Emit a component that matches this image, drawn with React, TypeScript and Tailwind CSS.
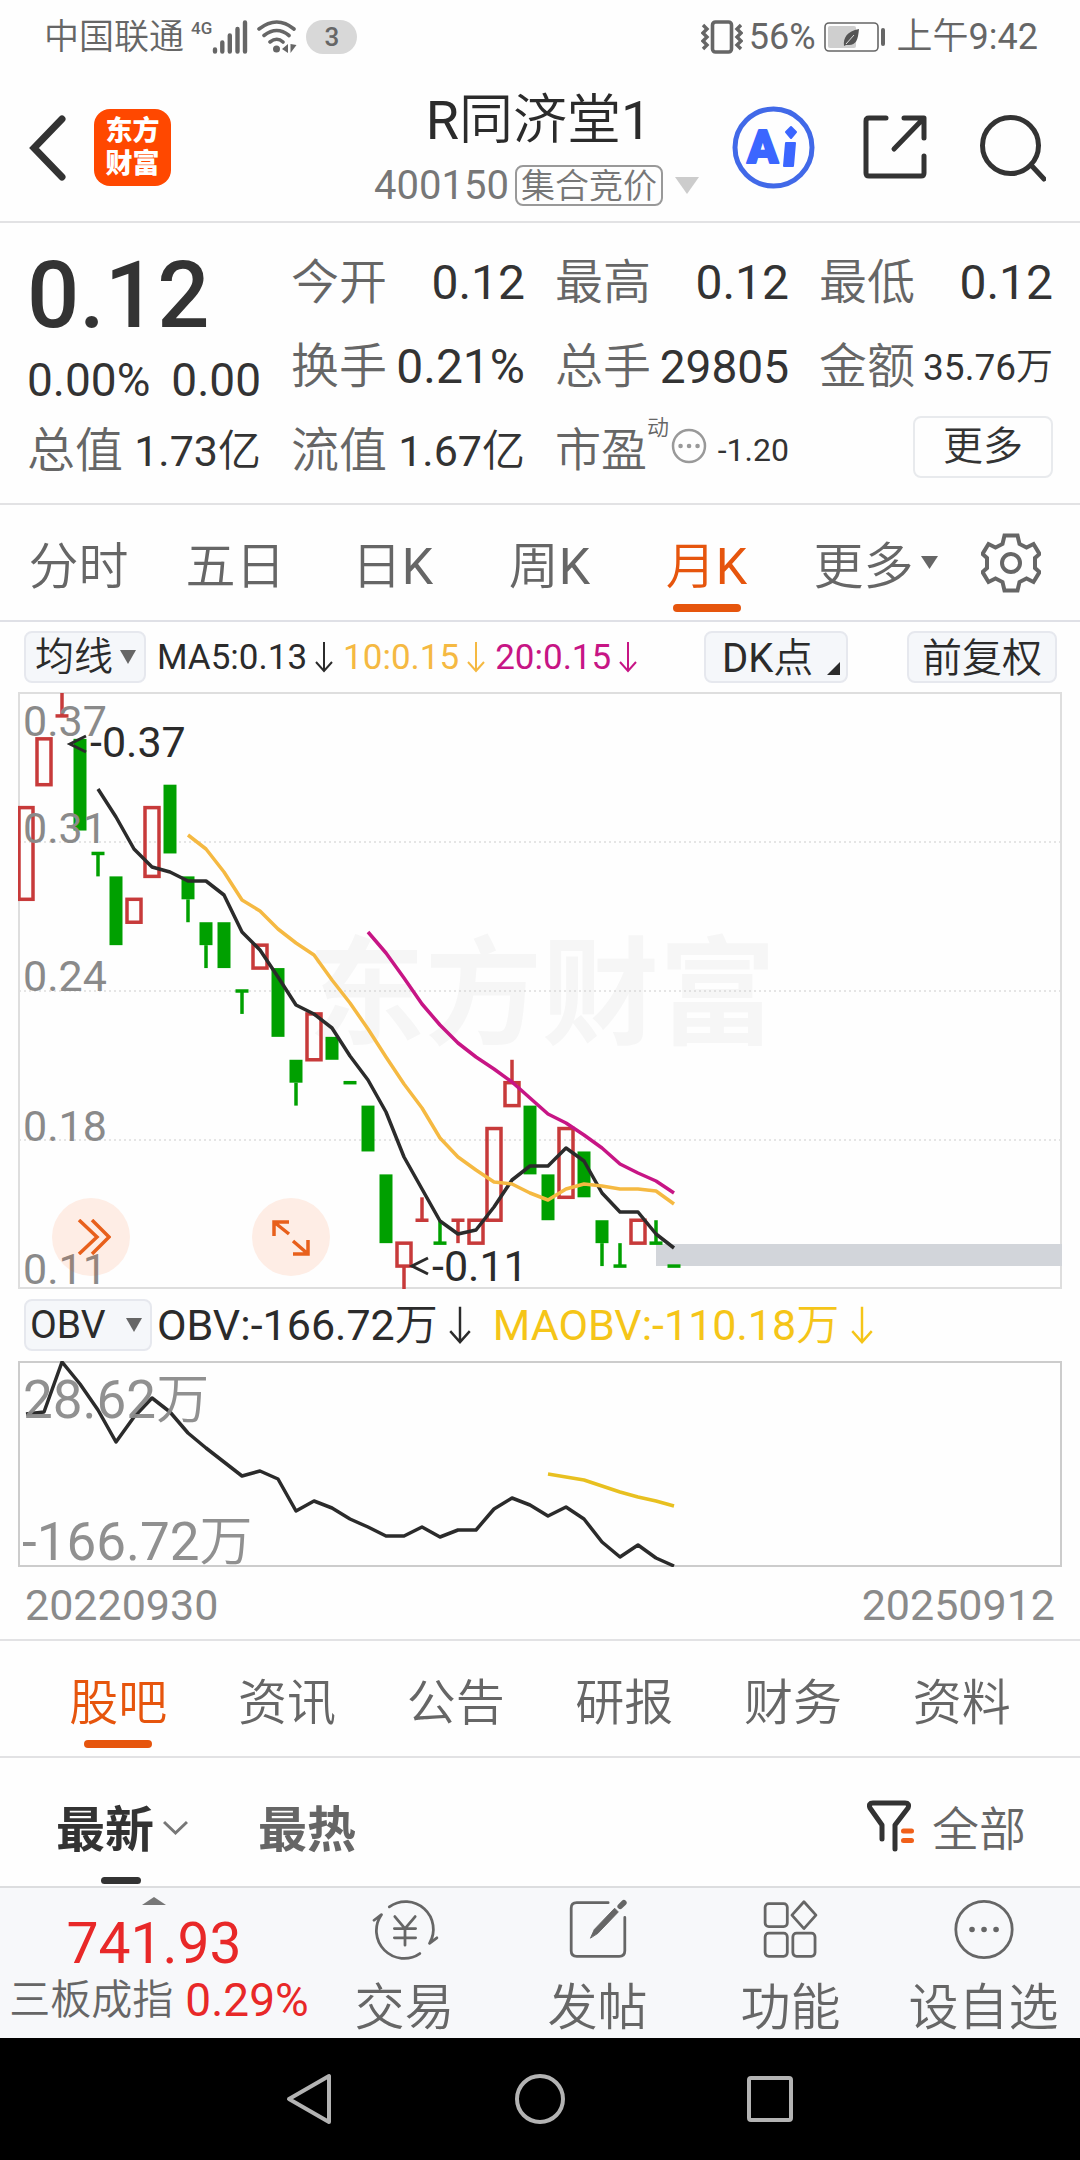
import React from "react";

type Candle = {
  up?: boolean;
  open: number;
  close: number;
  high?: number;
  low?: number;
};

// levels are counted downwards, one level is one cent
const candles: Candle[] = [
  { up: true, open: 5, close: 9 },
  { up: true, open: 2, close: 4 },
  { up: true, open: 1, close: 1, high: 0 },
  { open: 2, close: 6 },
  { open: 7, close: 7, low: 8 },
  { open: 8, close: 11 },
  { up: true, open: 9, close: 10 },
  { up: true, open: 5, close: 8 },
  { open: 4, close: 7 },
  { open: 8, close: 9, low: 10 },
  { open: 10, close: 11, low: 12 },
  { open: 10, close: 12 },
  { open: 13, close: 13, low: 14 },
  { up: true, open: 11, close: 12 },
  { open: 12, close: 15 },
  { open: 16, close: 17, low: 18 },
  { up: true, open: 14, close: 16 },
  { open: 15, close: 16 },
  { open: 17, close: 17 },
  { open: 18, close: 20 },
  { open: 21, close: 24 },
  { up: true, open: 24, close: 25, low: 26 },
  { up: true, open: 23, close: 23, high: 22 },
  { open: 24, close: 24, high: 23 },
  { up: true, open: 23, close: 23, low: 24 },
  { up: true, open: 23, close: 24 },
  { up: true, open: 19, close: 23 },
  { up: true, open: 17, close: 18, high: 16 },
  { open: 18, close: 21 },
  { open: 21, close: 23 },
  { up: true, open: 19, close: 22 },
  { open: 20, close: 22 },
  { open: 23, close: 24, low: 25 },
  { open: 25, close: 25, high: 24 },
  { up: true, open: 23, close: 24 },
  { open: 24, close: 24, high: 23 },
  { open: 25, close: 25 },
];

const ma5 = [
  97, 125, 157, 175, 180, 189, 189, 203, 240, 258, 285, 313, 322, 336, 364, 388,
  420, 465, 497, 529, 542, 538, 515, 488, 474, 474, 456, 469, 501, 520, 520, 542,
  556,
];
const ma10 = [
  143, 157, 180, 208, 219, 237, 251, 263, 288, 311, 337, 365, 392, 416, 446, 465,
  478, 490, 492, 501, 508, 497, 492, 494, 497, 497, 499, 512,
];
const ma20 = [
  240, 261, 286, 312, 333, 351, 365, 377, 390, 406, 422, 431, 443, 456, 472, 481,
  489, 501,
];
const obv = [
  53, 51, 1, 23, 49, 81, 56, 37, 51, 72, 87, 101, 115, 110, 118, 150, 140, 147,
  158, 166, 175, 175, 166, 176, 169, 169, 148, 137, 144, 155, 146, 158, 181, 196,
  184, 197, 205,
];
const maObv = [113, 116, 119, 125, 131, 136, 140, 145];

const xOf = (i: number) => 8 + i * 18;
const yOf = (level: number) => 1 + (level * 596) / 26;
const toPoints = (ys: number[], start: number) =>
  ys.map((y, i) => `${xOf(i + start)},${y}`).join(" ");

const StatusBar = () => (
  <div className="flex h-[74px] items-center justify-between pl-[44px] pr-[42px] text-[#666]">
    <div className="flex items-center">
      <span className="text-[35px] leading-none font-[350]">中国联通</span>
      <span className="ml-[7px] mb-[18px] text-[17px] leading-none font-medium">4G</span>
      <svg className="h-[34px] w-[36px]" viewBox="0 0 36 34" stroke="#666" strokeWidth="4.4" strokeLinecap="round">
        <path d="M3 29.500v2M10.300 22.500v9M17.800 15.500v16M25.500 9v22.500M33 2.500v29" />
      </svg>
      <svg className="ml-[9px] h-[34px] w-[40px]" viewBox="0 0 40 34" fill="none" stroke="#666" strokeWidth="3.600" strokeLinecap="round">
        <path d="M2 9Q20-5 37 9M7 15.500Q20 5.500 32 15.500M13 22Q20 16.500 26 22" />
        <circle cx="19.500" cy="29" r="3.500" fill="#666" stroke="none" />
        <path d="M31 24v9l-6-4zM33.500 24v9l6-8z" fill="#666" stroke="none" />
      </svg>
      <span className="ml-[9px] flex h-[34px] w-[51px] items-center justify-center rounded-full bg-[#d8d8d8] text-[26px] leading-none font-medium">
        3
      </span>
    </div>
    <div className="flex items-center text-[36px] leading-none">
      <svg className="h-[34px] w-[42px]" viewBox="0 0 42 34" fill="none" stroke="#666">
        <rect x="11.500" y="2" width="19" height="30" rx="3" strokeWidth="3.600" />
        <path d="M2 5l4 4-4 4 4 4-4 4 4 4-4 4M40 5l-4 4 4 4-4 4 4 4-4 4 4 4" strokeWidth="3.400" />
      </svg>
      <span className="ml-[6px]">56%</span>
      <svg className="ml-[8px] h-[30px] w-[62px]" viewBox="0 0 62 30" fill="none">
        <rect x="1" y="1" width="53" height="28" rx="4" stroke="#666" strokeWidth="1.600" />
        <rect x="4" y="4" width="28" height="22" rx="2" fill="#cfcfcf" />
        <path d="M35 7c-1 11-3 16-10 16l-3 0-2 1c-1-8 3-15 15-17z" fill="#555" />
        <path d="M22 22l8-9" stroke="#ddd" strokeWidth="1" />
        <rect x="57" y="6" width="4" height="18" rx="2" fill="#666" />
      </svg>
      <span className="ml-[11px] font-[350]">上午</span>
      <span>9:42</span>
    </div>
  </div>
);

const Header = () => (
  <header className="flex h-[149px] items-center border-b-2 border-[#e2e2e4] pl-[28px] pr-[34px] text-[#333]">
    <button aria-label="返回">
      <svg className="h-[66px] w-[38px]" viewBox="0 0 38 66" fill="none" stroke="#333" strokeWidth="7" strokeLinecap="round">
        <path d="M34 4L6 33l28 29" />
      </svg>
    </button>
    <div className="ml-[28px] grid h-[77px] w-[77px] place-content-center rounded-[16px] bg-[#ff4800] text-[27px] leading-[33px] font-black text-white">
      <span>东方</span>
      <span>财富</span>
    </div>
    <button className="ml-auto flex flex-col items-center gap-[14px] pt-[2px]">
      <span className="pl-[4px] text-[54px] leading-[60px] text-[#2b2b2b]">
        R<span className="font-[350]">同济堂</span>1
      </span>
      <span className="flex items-center text-[#777]">
        <span className="text-[40px] leading-none">400150</span>
        <span className="ml-[6px] flex h-[41px] items-center rounded-[8px] border-2 border-[#999] px-[4px] text-[34px] leading-none font-[350]">
          集合竞价
        </span>
        <svg className="ml-[12px] h-[17px] w-[24px]" viewBox="0 0 24 17">
          <path d="M0 0h24L12 17z" fill="#ccc" />
        </svg>
      </span>
    </button>
    <button aria-label="AI" className="ml-[33px]">
      <svg className="h-[83px] w-[83px]" viewBox="0 0 83 83">
        <circle cx="41.500" cy="41.500" r="38.500" fill="none" stroke="#4169e8" strokeWidth="5" />
        <g fill="#3b66ff" stroke="#3b66ff" strokeWidth="2" strokeLinejoin="round">
          <text x="15" y="57" className="text-[46px] font-black">A</text>
          <path d="M54 37h9l-2 23h-9z" />
          <path d="M59 21l5 5-5 6-5-6z" />
        </g>
      </svg>
    </button>
    <button aria-label="分享" className="ml-[48px]">
      <svg className="h-[65px] w-[65px]" viewBox="0 0 65 65" fill="none" stroke="#333" strokeWidth="5" strokeLinecap="round" strokeLinejoin="round">
        <path d="M23 3H6q-3 0-3 3v52q0 3 3 3h52q3 0 3-3V41M41 3h20v20M60 4L31 34" />
      </svg>
    </button>
    <button aria-label="搜索" className="ml-[52px]">
      <svg className="h-[68px] w-[66px]" viewBox="0 0 66 68" fill="none" stroke="#333" strokeWidth="5" strokeLinecap="round">
        <circle cx="30.500" cy="31.500" r="28" />
        <path d="M51 51l13 14" />
      </svg>
    </button>
  </header>
);

type StatProps = { label: string; value: string; unit?: string; size?: string };

const Stat = ({ label, value, unit, size = "text-[48px]" }: StatProps) => (
  <div className="flex items-center justify-between pt-[4px]">
    <span className="text-[48px] leading-none font-[350] text-[#666]">{label}</span>
    <span className={`${size} leading-none text-[#333]`}>
      {value}
      {unit && <span className="font-[350]">{unit}</span>}
    </span>
  </div>
);

const Quote = () => (
  <section className="grid auto-rows-[84px] grid-cols-4 gap-x-[30px] border-b-2 border-[#e2e2e4] px-[27px] pt-[16px] pb-[12px] whitespace-nowrap">
    <div className="row-span-2 text-[#333]">
      <div className="text-[92px] leading-[114px] font-medium">0.12</div>
      <div className="flex justify-between text-[46px] leading-[54px]">
        <span>0.00%</span>
        <span>0.00</span>
      </div>
    </div>
    <Stat label="今开" value="0.12" />
    <Stat label="最高" value="0.12" />
    <Stat label="最低" value="0.12" />
    <Stat label="换手" value="0.21%" />
    <Stat label="总手" value="29805" size="text-[46px]" />
    <Stat label="金额" value="35.76" unit="万" size="text-[37px]" />
    <Stat label="总值" value="1.73" unit="亿" size="text-[43px]" />
    <Stat label="流值" value="1.67" unit="亿" size="text-[43px]" />
    <div className="flex items-center pt-[2px]">
      <span className="text-[46px] leading-none font-[350] text-[#666]">市盈</span>
      <span className="mb-[44px] text-[22px] leading-none font-[350] text-[#666]">动</span>
      <svg className="mb-[9px] ml-[2px] h-[36px] w-[36px]" viewBox="0 0 36 36">
        <circle cx="18" cy="18" r="16" fill="none" stroke="#999" strokeWidth="2.500" />
        <path d="M9.500 18h.1M18 18h.1M26.500 18h.1" stroke="#999" strokeWidth="4.500" strokeLinecap="round" />
      </svg>
      <span className="ml-auto text-[32px] leading-none text-[#333]">-1.20</span>
    </div>
    <button className="mt-[9px] ml-auto h-[62px] w-[140px] rounded-[8px] border-2 border-[#e8eaed] text-[40px] leading-none font-[350] text-[#333]">
      更多
    </button>
  </section>
);

const periods = [
  { name: "分时" },
  { name: "五日" },
  { name: "日", suffix: "K" },
  { name: "周", suffix: "K" },
  { name: "月", suffix: "K", active: true },
];

const PeriodTabs = () => (
  <nav className="flex h-[117px] border-b-2 border-[#dfe0e6] text-[50px] leading-none text-[#666]">
    <div className="grid flex-1 grid-cols-6">
      {periods.map((p) => (
        <button
          key={p.name}
          className={`relative flex items-center justify-center pt-[8px] ${p.active ? "text-[#e6550d]" : ""}`}
        >
          <span className="font-[350]">{p.name}</span>
          {p.suffix}
          {p.active && <span className="absolute bottom-[8px] h-[8px] w-[68px] rounded-full bg-[#e6550d]" />}
        </button>
      ))}
      <button className="flex items-center justify-center gap-[7px] pt-[8px] pl-[24px] font-[350]">
        更多
        <svg className="mb-[8px] h-[13px] w-[17px]" viewBox="0 0 17 13">
          <path d="M0 0h17L8.500 13z" fill="#666" />
        </svg>
      </button>
    </div>
    <button aria-label="设置" className="flex w-[138px] items-center justify-center">
      <svg className="h-[60px] w-[60px]" viewBox="-30 -30 60 60" fill="none" stroke="#666" strokeWidth="4">
        <path d="M-6.500-27.500h13l2 8.500 7 3.500 7-3.500 6 10-4.500 4v10l4.500 4-6 10-7-3.500-7 3.500-2 8.500h-13l-2-8.500-7-3.500-7 3.500-6-10 4.500-4v-10l-4.500-4 6-10 7 3.500 7-3.500z" />
        <circle r="9" />
      </svg>
    </button>
  </nav>
);

const Down = ({ className }: { className: string }) => (
  <svg className={className} viewBox="0 0 18 32" fill="none" stroke="currentColor" strokeWidth="2">
    <path d="M9 1v29M1 21l8 9 8-9" />
  </svg>
);

const Picker = ({ label, value, className }: { label: string; value: string; className: string }) => (
  <div className="relative">
    <select
      aria-label={label}
      className={`block h-[52px] appearance-none rounded-[8px] border-2 border-[#e6e8ee] bg-[#f5f7fa] text-[39px] leading-[48px] text-[#2b2b2b] ${className}`}
    >
      <option>{value}</option>
    </select>
    <svg className="pointer-events-none absolute top-[19px] right-[10px] h-[14px] w-[16px]" viewBox="0 0 16 14">
      <path d="M0 0h16L8 14z" fill="#666" />
    </svg>
  </div>
);

const chip =
  "relative flex h-[52px] items-center rounded-[8px] border-2 border-[#e6e8ee] bg-[#f5f7fa] pt-[3px] text-[40px] leading-none text-[#2b2b2b]";

const AverageBar = () => (
  <div className="flex h-[70px] items-center pl-[24px] pr-[23px] text-[35px] leading-none whitespace-nowrap">
    <Picker label="主图指标" value="均线" className="w-[122px] pl-[9px] font-[350]" />
    <span className="ml-[11px] text-[#2b2b2b]">MA5:0.13</span>
    <Down className="ml-[8px] h-[32px] w-[18px] text-[#2b2b2b]" />
    <span className="ml-[10px] text-[#f5b942]">10:0.15</span>
    <Down className="ml-[8px] h-[32px] w-[18px] text-[#f5b942]" />
    <span className="ml-[10px] text-[#c71585]">20:0.15</span>
    <Down className="ml-[8px] h-[32px] w-[18px] text-[#c71585]" />
    <button className={`${chip} ml-auto w-[144px] pl-[16px]`}>
      DK<span className="font-[350]">点</span>
      <svg className="absolute right-[6px] bottom-[6px] h-[13px] w-[13px]" viewBox="0 0 13 13">
        <path d="M13 0v13H0z" fill="#2b2b2b" />
      </svg>
    </button>
    <button className={`${chip} ml-[59px] w-[150px] justify-center font-[350]`}>前复权</button>
  </div>
);

const Bar = ({ c, x }: { c: Candle; x: number }) => {
  const color = c.up ? "#c73a3a" : "#00a000";
  const top = yOf(c.open);
  const bottom = yOf(c.close);
  return (
    <g stroke={color} strokeWidth="3.500">
      {c.high !== undefined && <path d={`M${x} ${yOf(c.high)}V${top}`} />}
      {c.low !== undefined && <path d={`M${x} ${bottom}V${yOf(c.low)}`} />}
      {c.open === c.close ? (
        <path d={`M${x - 6.5} ${top}h13`} />
      ) : c.up ? (
        <rect x={x - 7} y={top} width="14" height={bottom - top} fill="none" />
      ) : (
        <rect x={x - 6.5} y={top} width="13" height={bottom - top} fill={color} stroke="none" />
      )}
    </g>
  );
};

const PriceChart = () => (
  <div className="relative px-[18px]">
    <svg className="block w-full" viewBox="0 0 1044 597">
      <text x="290" y="343" className="text-[117px] font-bold" fill="#f6f6f6">
        东方财富
      </text>
      <path d="M1 150h1042M1 299h1042M1 448h1042" stroke="#ccc" strokeDasharray="2 3" />
      <rect x="1" y="1" width="1042" height="595" fill="none" stroke="#dedede" strokeWidth="2" />
      <rect x="638" y="552" width="406" height="22" fill="#d2d5da" />
      {candles.map((c, i) => (
        <Bar key={i} c={c} x={xOf(i)} />
      ))}
      <g fill="none" strokeWidth="3.500" strokeLinejoin="round">
        <polyline points={toPoints(ma5, 4)} stroke="#2b2b2b" />
        <polyline points={toPoints(ma10, 9)} stroke="#f5b942" />
        <polyline points={toPoints(ma20, 19)} stroke="#c71585" />
      </g>
      <g fill="#8a8a8a" className="text-[43px]">
        <text x="5" y="44">0.37</text>
        <text x="5" y="151">0.31</text>
        <text x="5" y="299">0.24</text>
        <text x="5" y="449">0.18</text>
        <text x="5" y="592">0.11</text>
      </g>
      <g fill="#2b2b2b" className="text-[43px]">
        <text x="72" y="65">-0.37</text>
        <text x="414" y="589">-0.11</text>
      </g>
      <path d="M68 44l-16 8 16 8M410 566l-16 8 16 8" fill="none" stroke="#2b2b2b" strokeWidth="3" />
    </svg>
    <button
      aria-label="展开"
      className="absolute bottom-[13px] left-[52px] flex h-[78px] w-[78px] items-center justify-center rounded-full bg-[#ff5a0a]/10 pl-[6px]"
    >
      <svg className="h-[36px] w-[34px]" viewBox="0 0 34 36" fill="none" stroke="#e8601c" strokeWidth="3.500">
        <path d="M2 1l18 17L2 35M15 1l17 17-17 17" />
      </svg>
    </button>
    <button
      aria-label="全屏"
      className="absolute bottom-[13px] left-[252px] flex h-[78px] w-[78px] items-center justify-center rounded-full bg-[#ff5a0a]/10"
    >
      <svg className="h-[40px] w-[40px]" viewBox="0 0 40 40" fill="none" stroke="#e8601c" strokeWidth="3.500">
        <path d="M18 5H3v14M3 5l15 12M22 37h15V23M37 37L22 24" />
      </svg>
    </button>
  </div>
);

const ObvChart = () => (
  <>
    <div className="flex h-[72px] items-center pl-[24px] text-[43px] leading-none whitespace-nowrap">
      <Picker label="副图指标" value="OBV" className="w-[128px] pl-[4px]" />
      <span className="ml-[5px] text-[#2b2b2b]">
        OBV:-166.72<span className="font-[350]">万</span>
      </span>
      <Down className="ml-[11px] h-[40px] w-[22px] text-[#2b2b2b]" />
      <span className="ml-[22px] text-[#f5c518]">
        MAOBV:-110.18<span className="font-[350]">万</span>
      </span>
      <Down className="ml-[12px] h-[40px] w-[22px] text-[#f5c518]" />
    </div>
    <div className="px-[18px]">
      <svg className="block w-full" viewBox="0 0 1044 206">
        <rect x="1" y="1" width="1042" height="204" fill="none" stroke="#ccc" strokeWidth="2" />
        <g fill="none" strokeWidth="3.500" strokeLinejoin="round">
          <polyline points={toPoints(obv, 0)} stroke="#2b2b2b" />
          <polyline points={toPoints(maObv, 29)} stroke="#e8c020" />
        </g>
        <g fill="#8a8a8a" fillOpacity="0.95" className="text-[53px]">
          <text x="5" y="57">28.62<tspan className="font-[350]">万</tspan></text>
          <text x="4" y="199">-166.72<tspan className="font-[350]">万</tspan></text>
        </g>
      </svg>
    </div>
    <div className="flex h-[74px] items-center justify-between border-b-2 border-[#e2e2e4] px-[25px] pt-[4px] text-[43px] leading-none text-[#8a8a8a]">
      <span>20220930</span>
      <span>20250912</span>
    </div>
  </>
);

const sections = ["股吧", "资讯", "公告", "研报", "财务", "资料"];

const SectionTabs = () => (
  <nav className="grid h-[117px] grid-cols-6 border-b-2 border-[#e2e2e4] px-[34px] text-[49px] leading-none font-[350] text-[#666]">
    {sections.map((s, i) => (
      <button
        key={s}
        className={`relative flex items-center justify-center pt-[10px] ${i === 0 ? "text-[#e6550d]" : ""}`}
      >
        {s}
        {i === 0 && <span className="absolute bottom-[8px] h-[8px] w-[68px] rounded-full bg-[#e6550d]" />}
      </button>
    ))}
  </nav>
);

const SortBar = () => (
  <div className="flex h-[128px] items-center pl-[56px] pr-[54px] text-[49px] leading-none">
    <button className="relative flex h-full items-center gap-[9px] pt-[16px] font-bold text-[#333]">
      最新
      <svg className="mb-[4px] h-[16px] w-[25px]" viewBox="0 0 25 16" fill="none" stroke="#777" strokeWidth="3">
        <path d="M1 2l11.500 11L24 2" />
      </svg>
      <span className="absolute bottom-[2px] left-[45px] h-[7px] w-[40px] rounded-full bg-[#333]" />
    </button>
    <button className="ml-[70px] pt-[16px] font-bold text-[#666]">最热</button>
    <button className="ml-auto flex items-center gap-[17px] pt-[8px] text-[47px] font-[350] text-[#666]">
      <svg className="h-[52px] w-[48px]" viewBox="0 0 48 52" fill="none" strokeWidth="5" strokeLinecap="round" strokeLinejoin="round">
        <path d="M15 39V25L3 8Q1 3 6 3h32q5 0 3 5L28 25v24" stroke="#333" />
        <path d="M36.500 31h8M36.500 40.500h8" stroke="#f0601a" />
      </svg>
      <span className="pt-[6px]">全部</span>
    </button>
  </div>
);

const actions = [
  {
    label: "交易",
    icon: (
      <>
        <path d="M20 8.500A30 30 0 0 1 63.500 48l8-6" />
        <path d="M53 59A30 30 0 0 1 11.500 17l-8 6" />
        <path d="M26 19l11 13 11-13M37 32v18M25.500 32h23M25.500 42h23" />
      </>
    ),
  },
  {
    label: "发帖",
    icon: (
      <>
        <path d="M48 4H14q-6 0-6 6v46q0 6 6 6h46q6 0 6-6V20" />
        <path d="M29 42l4-9 22-23 4 4-22 23z" fill="#666" strokeWidth="1" />
        <path d="M61 8l4-4" strokeWidth="6" />
      </>
    ),
  },
  {
    label: "功能",
    icon: (
      <>
        <rect x="9" y="5" width="24" height="25" rx="4" />
        <path d="M51 3l13 14.500L51 32 38 17.500z" />
        <rect x="9" y="37" width="24" height="25" rx="4" />
        <rect x="39" y="37" width="24" height="25" rx="4" />
      </>
    ),
  },
  {
    label: "设自选",
    icon: (
      <>
        <circle cx="37" cy="33" r="30.500" />
        <path d="M24 33h.1M37 33h.1M50 33h.1" strokeWidth="6" />
      </>
    ),
  },
];

const BottomBar = () => (
  <footer className="flex h-[152px] border-t-2 border-[#dcdddf] bg-[#f7f8fa] whitespace-nowrap">
    <button className="flex w-[308px] flex-col items-center pt-[9px] text-[#e82828]">
      <svg className="h-[8px] w-[24px]" viewBox="0 0 24 8">
        <path d="M0 8L12 0l12 8z" fill="#777" />
      </svg>
      <span className="mt-[8px] text-[57px] leading-[62px]">741.93</span>
      <span className="flex items-center pl-[10px] text-[46px] leading-[50px]">
        <span className="mr-[12px] text-[41px] font-[350] text-[#666]">三板成指</span>
        0.29%
      </span>
    </button>
    {actions.map((a) => (
      <button key={a.label} className="flex flex-1 flex-col items-center pt-[11px] text-[50px] leading-[60px] font-[350] text-[#666]">
        <svg
          className="mb-[18px] h-[66px] w-[74px]"
          viewBox="0 0 74 66"
          fill="none"
          stroke="#666"
          strokeWidth="3"
          strokeLinecap="round"
          strokeLinejoin="round"
        >
          {a.icon}
        </svg>
        {a.label}
      </button>
    ))}
  </footer>
);

const SystemNav = () => (
  <div className="flex flex-1 items-center justify-center gap-[181px] bg-black">
    <button aria-label="后退">
      <svg className="h-[52px] w-[48px]" viewBox="0 0 48 52" fill="none" stroke="#b3b3b3" strokeWidth="4" strokeLinejoin="round">
        <path d="M43 3v46L3 26z" />
      </svg>
    </button>
    <button aria-label="主页">
      <svg className="h-[52px] w-[50px]" viewBox="0 0 50 52" fill="none" stroke="#b3b3b3" strokeWidth="4">
        <circle cx="25" cy="26" r="23" />
      </svg>
    </button>
    <button aria-label="最近任务">
      <svg className="h-[52px] w-[48px]" viewBox="0 0 48 52" fill="none" stroke="#b3b3b3" strokeWidth="4">
        <rect x="3" y="5" width="42" height="42" rx="2" />
      </svg>
    </button>
  </div>
);

const App = () => {
  return (
    <div className="flex min-h-screen flex-col bg-[#fefefe] font-[Roboto,'Noto_Sans_CJK_SC',sans-serif]">
      <StatusBar />
      <Header />
      <Quote />
      <PeriodTabs />
      <AverageBar />
      <PriceChart />
      <ObvChart />
      <SectionTabs />
      <SortBar />
      <BottomBar />
      <SystemNav />
    </div>
  );
};

export default App;
